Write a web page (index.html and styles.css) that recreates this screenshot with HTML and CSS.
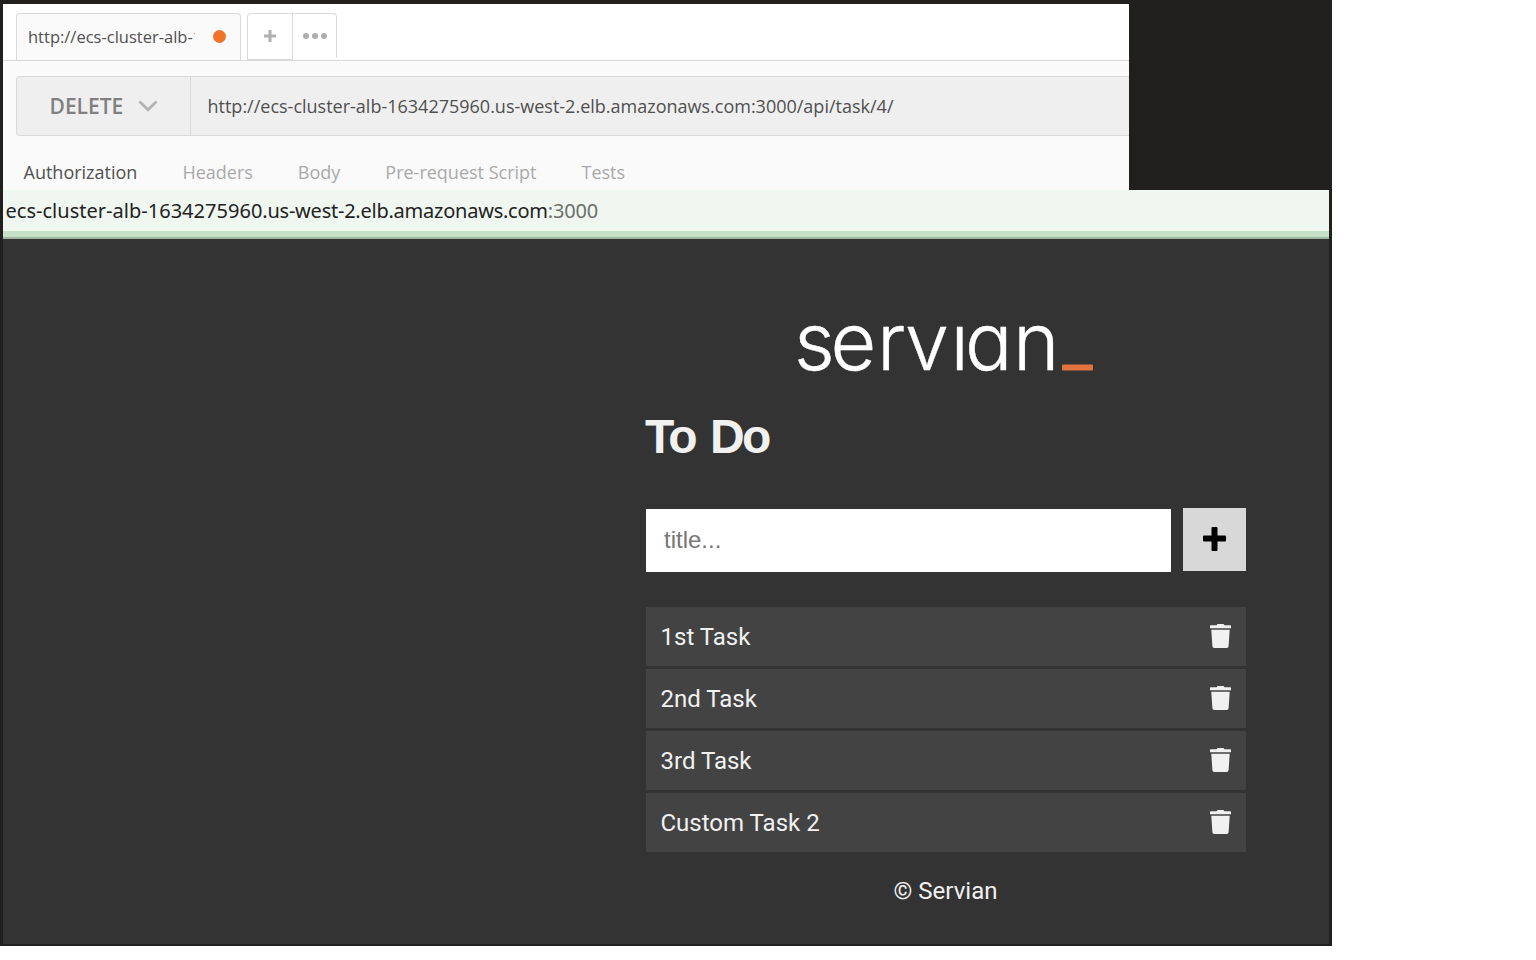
FILE: index.html
```html
<!DOCTYPE html>
<html lang="en">
<head>
<meta charset="utf-8">
<title>To Do</title>
<link rel="stylesheet" href="styles.css">
</head>
<body>
<svg class="defs" width="0" height="0">
  <symbol id="trash" viewBox="0 0 21 24">
    <path d="M0 1.8Q0 1.2.7 1.2H6.6L7.2.2Q7.4 0 8 0h5q.6 0 .8.2l.6 1h5.9q.7 0 .7.6V4.2H0zM1.3 5.8H19.7L18.6 22.2Q18.4 24 16.8 24H4.2Q2.6 24 2.4 22.2z" fill="#f1f1f1"/>
  </symbol>
</svg>
<div class="frame">
  <section class="client">
    <div class="tabs">
      <div class="tab"><span class="tab-label">http://ecs-cluster-alb-1</span><span class="dot"></span></div>
      <div class="tab-actions">
        <button class="tab-btn new"><svg width="12" height="12"><path d="M6 0v12M0 6h12" stroke="#b0b0b0" stroke-width="3"/></svg></button>
        <button class="tab-btn more"><svg width="24" height="6"><g fill="#adadad"><circle cx="3" cy="3" r="3"/><circle cx="12" cy="3" r="3"/><circle cx="21" cy="3" r="3"/></g></svg></button>
      </div>
    </div>
    <div class="request">
      <div class="method"><span class="method-name">DELETE</span><svg width="20" height="12"><path d="M1.5 1.5 10 9.8 18.5 1.5" fill="none" stroke="#b3b3b3" stroke-width="2.8"/></svg></div>
      <div class="url">http://ecs-cluster-alb-1634275960.us-west-2.elb.amazonaws.com:3000/api/task/4/</div>
    </div>
    <nav class="sections">
      <span class="section active">Authorization</span>
      <span class="section">Headers</span>
      <span class="section">Body</span>
      <span class="section">Pre-request Script</span>
      <span class="section">Tests</span>
    </nav>
  </section>
  <div class="address"><span class="host"><span class="cluster">ecs-cluster-alb-1634275960</span>.us-west-2.elb.amazonaws.com</span><span class="port">:3000</span></div>
  <main class="app">
    <div class="todo">
      <svg class="logo" width="300" height="60" viewBox="795 320 300 60">
        <text class="wordmark" x="794 830.5 877 905 950.5 965 1013" y="370">servıan</text>
        <rect x="1062" y="364.5" width="31" height="6" rx="1" fill="#e2733f"/>
      </svg>
      <h1 class="title">To Do</h1>
      <form class="add">
        <input class="field" type="text" placeholder="title...">
        <button class="submit" type="button"><svg width="23" height="24"><path d="M8.5 1q0-1 1-1h4q1 0 1 1v7.5H22q1 0 1 1v4q0 1-1 1h-7.5V23q0 1-1 1h-4q-1 0-1-1v-8.500H1q-1 0-1-1v-4q0-1 1-1h7.500z"/></svg></button>
      </form>
      <ul class="tasks">
        <li class="task"><span>1st Task</span><svg width="21" height="24"><use href="#trash"/></svg></li>
        <li class="task"><span>2nd Task</span><svg width="21" height="24"><use href="#trash"/></svg></li>
        <li class="task"><span>3rd Task</span><svg width="21" height="24"><use href="#trash"/></svg></li>
        <li class="task"><span>Custom Task 2</span><svg width="21" height="24"><use href="#trash"/></svg></li>
      </ul>
      <footer class="footer">© Servian</footer>
    </div>
  </main>
</div>
</body>
</html>
```
FILE: styles.css
```css
* { box-sizing: border-box; }
body { margin: 0; background: #fff; overflow: hidden; }
.defs { position: absolute; }
svg { display: block; flex: none; }
button { border: 0; padding: 0; margin: 0; background: none; }
.frame { width: 1332px; height: 946px; padding: 4px 3px 2px; background: #21201e; display: flex; flex-direction: column; }

.client { width: 1126px; height: 186px; background: #fafafa; font-family: "Open Sans", sans-serif; overflow: hidden; }
.tabs { height: 57px; padding: 9px 0 0 13px; display: flex; gap: 6px; background: #fff; border-bottom: 1px solid #d9d9d9; }
.tab { width: 225px; height: 47px; padding: 0 14px 1px 11px; display: flex; align-items: center; justify-content: space-between; background: #fafafa; border: 1px solid #d9d9d9; border-bottom: 0; border-radius: 4px 4px 0 0; }
.tab-label { width: 167px; overflow: hidden; white-space: nowrap; font-size: 16.5px; line-height: 24px; color: #505050; }
.dot { width: 13px; height: 13px; border-radius: 50%; background: #ef7428; }
.tab-actions { display: flex; height: 47px; }
.tab-btn { display: flex; align-items: center; justify-content: center; border: 1px solid #d9d9d9; }
.tab-btn.new { width: 46px; padding-bottom: 2px; border-radius: 4px 0 0 0; }
.tab-btn.more { width: 44px; height: 45px; border-left: 0; border-bottom: 0; border-radius: 0 4px 0 0; }
.request { height: 60px; margin: 15px 0 0 13px; display: flex; background: #efefef; border: 1px solid #d9d9d9; border-right: 0; border-radius: 4px 0 0 4px; }
.method { width: 174px; padding: 0 0 1px 32.5px; display: flex; align-items: center; gap: 14.5px; border-right: 1px solid #d9d9d9; }
.method-name { width: 74px; font-size: 21px; font-weight: 600; color: #808080; }
.url { padding-left: 16.5px; line-height: 58px; font-size: 18px; color: #505050; white-space: nowrap; }
.sections { padding: 23px 0 0 20.5px; display: flex; gap: 45px; font-size: 18px; line-height: 26px; color: #a9a9a9; white-space: nowrap; }
.section.active { color: #505050; }

.address { height: 49px; padding-left: 2.5px; background: #f0f7f1; border-bottom: 2px solid #9eb3a0; box-shadow: inset 0 -6px #c5e1c7; font-family: "Noto Sans", sans-serif; font-size: 20px; line-height: 41px; white-space: nowrap; }
.host { color: #222; letter-spacing: -.24px; }
.cluster { letter-spacing: .02px; }
.port { color: #6b706c; letter-spacing: -.2px; }

.app { flex: 1; padding: 81px 0 0 643px; background: #333; color: #f1f1f1; font-family: Roboto, sans-serif; }
.todo { width: 600px; }
.logo { margin: 0 auto; position: relative; left: -1px; overflow: visible; }
.wordmark { font-family: Inter, sans-serif; font-weight: 300; font-size: 79px; font-feature-settings: "cv11"; fill: #fff; stroke: #fff; stroke-width: .4px; stroke-linejoin: round; }
.title { margin: 28px 0 0 -1px; height: 58px; font-family: "Liberation Sans", sans-serif; font-size: 48px; line-height: 58px; letter-spacing: -2.5px; word-spacing: 4px; font-weight: 700; }
.add { margin-top: 42px; display: flex; justify-content: space-between; }
.field { width: 525px; height: 63px; margin-top: 1px; padding: 0 18px 2px; border: 0; background: #fff; font: 24px "Liberation Sans", sans-serif; }
.field::placeholder { color: #777; }
.submit { width: 63px; height: 63px; padding: 0 1px 1px 0; display: flex; align-items: center; justify-content: center; background: #d8d8d8; }
.tasks { margin: 35px 0 0; padding: 0; list-style: none; display: grid; gap: 3px; }
.task { height: 59px; padding: 0 15px 0 14.5px; display: flex; align-items: center; justify-content: space-between; background: #434343; font-size: 24px; }
.task svg { margin-bottom: 2px; }
.footer { margin: 24px 1px 0 0; text-align: center; font-size: 24px; line-height: 30px; }
```
